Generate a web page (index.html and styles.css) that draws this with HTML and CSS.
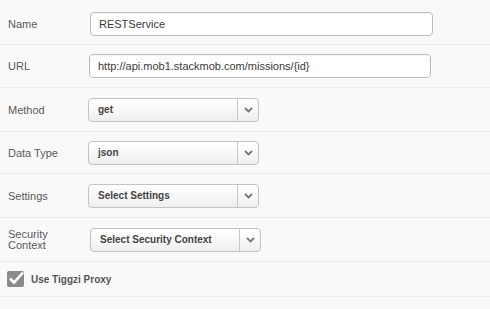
FILE: index.html
```html
<!DOCTYPE html>
<html lang="en">

<head>
    <meta charset="UTF-8">
    <title>REST Service</title>
    <link rel="stylesheet" href="styles.css">
</head>

<body>
    <div class="form">
        <div class="row first">
            <div class="label">Name</div>
            <div class="input name">RESTService</div>
        </div>
        <div class="row short">
            <div class="label">URL</div>
            <div class="input url">http://api.mob1.stackmob.com/missions/{id}</div>
        </div>
        <div class="row">
            <div class="label">Method</div>
            <div class="select">
                <div class="value">get</div>
                <div class="arrow"><svg width="9" height="6" viewBox="0 0 9 6"><path d="M1 1 L4.5 4.5 L8 1" fill="none" stroke="#777" stroke-width="1.8"/></svg></div>
            </div>
        </div>
        <div class="row shorter">
            <div class="label">Data Type</div>
            <div class="select">
                <div class="value">json</div>
                <div class="arrow"><svg width="9" height="6" viewBox="0 0 9 6"><path d="M1 1 L4.5 4.5 L8 1" fill="none" stroke="#777" stroke-width="1.8"/></svg></div>
            </div>
        </div>
        <div class="row">
            <div class="label">Settings</div>
            <div class="select">
                <div class="value">Select Settings</div>
                <div class="arrow"><svg width="9" height="6" viewBox="0 0 9 6"><path d="M1 1 L4.5 4.5 L8 1" fill="none" stroke="#777" stroke-width="1.8"/></svg></div>
            </div>
        </div>
        <div class="row">
            <div class="label two">Security<br>Context</div>
            <div class="select sec">
                <div class="value">Select Security Context</div>
                <div class="arrow"><svg width="9" height="6" viewBox="0 0 9 6"><path d="M1 1 L4.5 4.5 L8 1" fill="none" stroke="#777" stroke-width="1.8"/></svg></div>
            </div>
        </div>
        <div class="row check">
            <div class="box"><svg width="17" height="16" viewBox="0 0 17 16"><path d="M3 7.5 L7 11.5 L16 1.5" fill="none" stroke="#fff" stroke-width="2.6"/></svg></div>
            <div class="check_label">Use Tiggzi Proxy</div>
        </div>
    </div>
</body>

</html>
```

FILE: styles.css
```css
body {
    margin: 0px;
    background-color: #f9f9f9;
}

* {
    font-family: 'Liberation Sans', Arial, sans-serif;
    box-sizing: border-box;
}

.row {
    display: flex;
    align-items: center;
    height: 44px;
    padding-left: 8px;
    border-bottom: 1px solid #ebebeb;
}

.row.first {
    height: 45px;
    padding-top: 4px;
}

.row.short {
    height: 43px;
}

.row.shorter {
    height: 42px;
}

.label {
    width: 81px;
    font-size: 11px;
    color: #5a5a5a;
}

.label.two {
    line-height: 11px;
    width: 82px;
}

.input {
    height: 24px;
    line-height: 22px;
    padding: 0 8px;
    border: 1px solid #bdbdbd;
    border-radius: 4px;
    background-color: #fff;
    font-size: 11px;
    color: #3a3a3a;
    box-shadow: inset 0 1px 1px rgba(0, 0, 0, 0.04);
}

.input.name {
    width: 343px;
    margin-left: 1px;
}

.input.url {
    width: 342px;
}

.select {
    display: flex;
    width: 171px;
    height: 24px;
    margin-left: -1px;
    border: 1px solid #c3c3c3;
    border-radius: 4px;
    background: linear-gradient(#ffffff, #f6f6f6 60%, #eeeeee);
}

.select.sec {
    margin-left: 0px;
}

.value {
    flex: 1;
    padding-left: 9px;
    line-height: 22px;
    font-size: 10px;
    font-weight: bold;
    color: #444;
}

.arrow {
    width: 21px;
    border-left: 1px solid #c8c8c8;
    display: flex;
    align-items: center;
    justify-content: center;
    padding-top: 1px;
}

.row.check {
    height: 35px;
}

.box {
    width: 17px;
    height: 16px;
    margin-left: -1px;
    background-color: #8a8a8a;
    border-radius: 2px;
}

.check_label {
    margin-left: 7px;
    font-size: 10px;
    font-weight: bold;
    color: #555;
}
```
